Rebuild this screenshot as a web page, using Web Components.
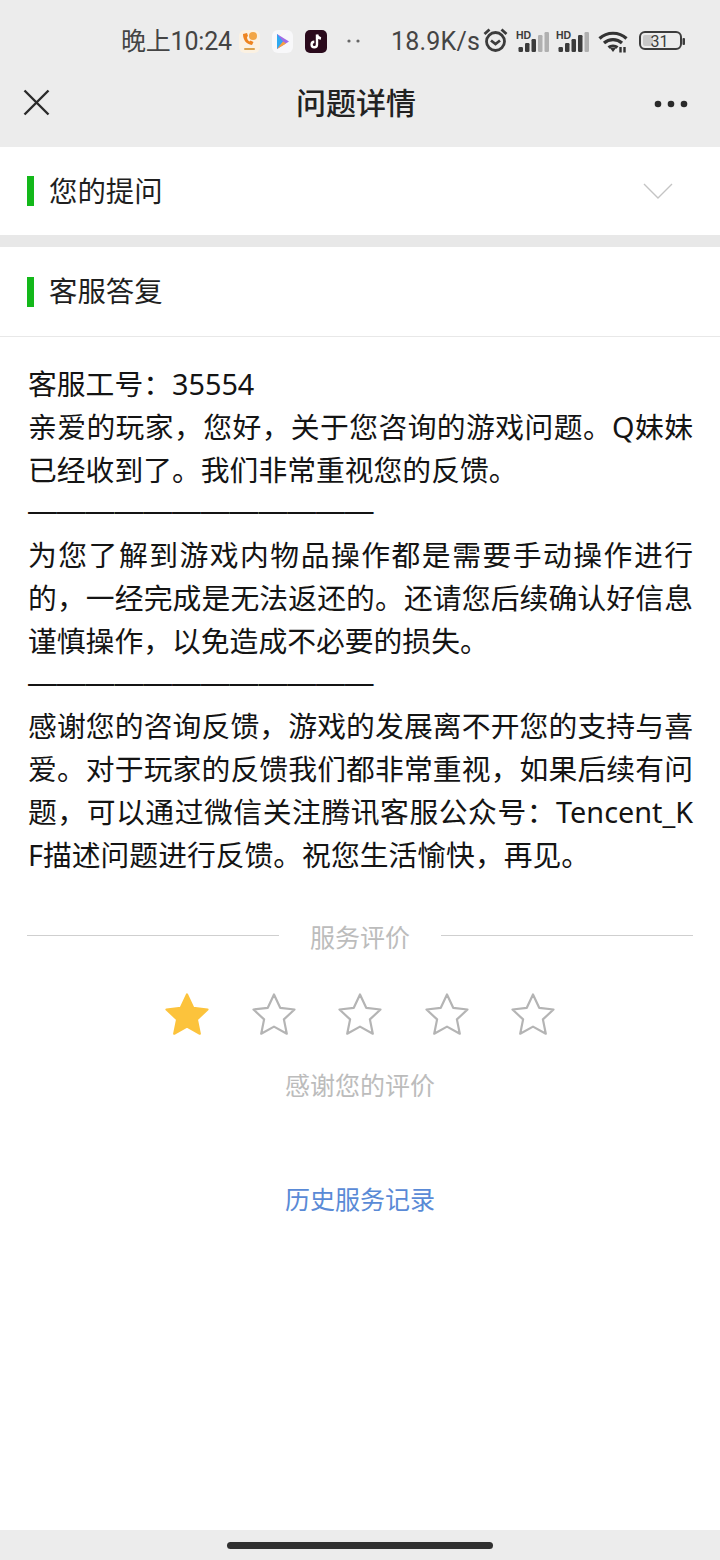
<!DOCTYPE html>
<html lang="zh-CN"><head><meta charset="utf-8"><title>问题详情</title>
<style>
html,body{margin:0;padding:0;background:#fff}
body{width:720px;height:1560px;display:flex;flex-direction:column;overflow:hidden;font-family:"Noto Sans CJK SC","Noto Sans",sans-serif;color:#1a1a1a}
</style></head><body>
<status-bar></status-bar>
<nav-bar title="问题详情"></nav-bar>
<section-head style="height:89px" chevron>您的提问</section-head>
<section-gap></section-gap>
<section-head style="height:90px;">客服答复</section-head>
<reply-body>
<p>客服工号：35554<br>亲爱的玩家，您好，关于您咨询的游戏问题。Q妹妹已经收到了。我们非常重视您的反馈。<br><dash-text>————————————</dash-text><br>为您了解到游戏内物品操作都是需要手动操作进行的，一经完成是无法返还的。还请您后续确认好信息谨慎操作，以免造成不必要的损失。<br><dash-text>————————————</dash-text><br>感谢您的咨询反馈，游戏的发展离不开您的支持与喜爱。对于玩家的反馈我们都非常重视，如果后续有问题，可以通过微信关注腾讯客服公众号：Tencent_KF描述问题进行反馈。祝您生活愉快，再见。</p>
</reply-body>
<service-rating score="1"></service-rating>
<history-link>历史服务记录</history-link>
<home-bar></home-bar>
<script>
function def(name, html){
  customElements.define(name, class extends HTMLElement{
    constructor(){super();this.attachShadow({mode:'open'}).innerHTML = html;}
  });
}
const hd = (n)=>{const xs=[2.5,9,15.5,22,28.5],hs=[5,9,13,17,20];
 return `<svg width="36" height="26" viewBox="0 0 36 26"><text x="0" y="10.500" font-family="Liberation Sans" font-weight="700" font-size="10.500" fill="#3c3c3c">HD</text>`+
 xs.map((x,i)=>`<rect x="${x}" y="${24-hs[i]}" width="4.500" height="${hs[i]}" rx="1.200" fill="${i<n?'#3c3c3c':'#b0b0b0'}"/>`).join('')+`</svg>`};
def('status-bar',`<style>
:host{display:flex;align-items:center;height:70px;background:#ececec;box-sizing:border-box;padding:12px 0 0 121px;color:#444;font:25px/30px Roboto,"Noto Sans CJK SC",sans-serif}
svg,b{display:block;flex:none}
.t{white-space:nowrap;padding-top:2px}
</style>
<span class="t" style="width:111px;letter-spacing:-.2px">晚上10:24</span>
<svg style="margin-left:7px" width="21" height="23" viewBox="0 0 21 23"><rect width="21" height="23" rx="6" fill="#fbf1e2"/><path d="M4 4c0 6 3 10 9 11l1.500-3-3-1.500-1 1c-1.500-1-2.500-2.500-2.500-4.500l1-1-1-3z" fill="#ee8420"/><circle cx="14" cy="6" r="4" fill="#f2a544"/><rect x="5" y="18" width="11" height="2" rx="1" fill="#dca24c"/></svg>
<svg style="margin-left:12px" width="21" height="23" viewBox="0 0 21 23"><rect width="21" height="23" rx="6" fill="#f8f8fa"/><path d="M5 4l12 7.500L5 19z" fill="#a06ce6"/><path d="M5 4l6 7.500L5 19z" fill="#2fa9f0"/><path d="M5 19l6-7.500 3 2z" fill="#f6a23e"/></svg>
<svg style="margin-left:12px" width="22" height="23" viewBox="0 0 22 23"><rect width="22" height="23" rx="5" fill="#2a0a1c"/><path d="M12 4.500v10a2.700 2.700 0 1 1-2.700-2.700M12 4.500c.3 2.400 1.700 3.700 4 4" fill="none" stroke="#fff" stroke-width="2.400"/></svg>
<svg style="margin-left:20px" width="13" height="6" viewBox="0 0 13 6"><circle cx="2" cy="3" r="1.600" fill="#666"/><circle cx="11" cy="3" r="1.600" fill="#666"/></svg>
<span class="t" style="margin-left:31px;width:89px;letter-spacing:.2px">18.9K/s</span>
<svg style="margin-left:3px;margin-top:-3px" width="25" height="26" viewBox="0 0 25 26" fill="none" stroke="#3c3c3c" stroke-width="2.800"><circle cx="12.500" cy="14.500" r="9"/><path d="M8 13.500l4.500 3.500 4.500-3.500M1.500 7l5-4.500M23.500 7l-5-4.500"/></svg>
<b style="margin-left:8px">${hd(3)}</b>
<b style="margin-left:4px">${hd(4)}</b>
<svg style="margin-left:5px" width="32" height="26" viewBox="0 0 32 26" fill="none" stroke="#333" stroke-width="3.200"><path d="M2.500 10.500c7.500-7 19.500-7 27 0M7 15c5-4.500 13-4.500 18 0M11.500 19.500c2.500-2 6.500-2 9 0"/><path d="M13 20h6l-3 4z" fill="#333" stroke="none"/><path d="M23.500 19v5.500M27.500 19v5.500" stroke-width="2.400"/></svg>
<svg style="margin-left:9px" width="48" height="22" viewBox="0 0 48 22"><rect x="2" y="2" width="41" height="17" rx="5" fill="none" stroke="#3c3c3c" stroke-width="2"/><rect x="5" y="5" width="10" height="11" rx="2" fill="#c8c8c8"/><text x="21.500" y="16.500" text-anchor="middle" font-family="Roboto" font-size="16" fill="#3c3c3c">31</text><rect x="44.500" y="8" width="2.500" height="7" rx="1" fill="#3c3c3c"/></svg>`);
def('nav-bar',`<style>
:host{display:grid;grid-template-columns:68px 1fr 76px;align-items:center;height:77px;box-sizing:border-box;padding-bottom:15px;background:#ececec;color:#222}
h1{margin:0;text-align:center;font:500 30px/40px "Noto Sans CJK SC",sans-serif}
.c{display:block;margin:2px 0 0 23px}
.m{display:block;margin:6px 0 0 10px}
</style>
<svg class="c" width="27" height="27" viewBox="0 0 27 27" fill="none" stroke="#2a2a2a" stroke-width="2.400"><path d="M1.500 1.500l24 24M25.500 1.500l-24 24"/></svg>
<h1>问题详情</h1>
<svg class="m" width="34" height="8" viewBox="0 0 34 8" fill="#2a2a2a"><circle cx="4" cy="4" r="3.300"/><circle cx="17" cy="4" r="3.300"/><circle cx="30" cy="4" r="3.300"/></svg>`);
customElements.define('section-head',class extends HTMLElement{
  constructor(){super();const chev=this.hasAttribute('chevron');
  this.attachShadow({mode:'open'}).innerHTML=`<style>
:host{display:flex;align-items:center;box-sizing:border-box;padding:0 47px 0 27px;background:#fff;border-bottom:1px solid #e8e8e8;color:#1f1f1f;font:28.400px/40px "Noto Sans CJK SC",sans-serif}
i{display:block;width:7px;height:30px;background:#13b81a;margin-right:15px}
span{flex:1;padding-bottom:3px}svg{display:block}
</style><i></i><span><slot></slot></span>${chev?'<svg width="30" height="16" viewBox="0 0 30 16" fill="none" stroke="#c4c4c4" stroke-width="1.400"><path d="M1 1l14 14L29 1"/></svg>':''}`}
});
def('section-gap',`<style>:host{display:block;height:11px;background:#e8e8e8}</style>`);
def('reply-body',`<style>
:host{display:block;padding:26px 27px 0 28px;color:#141414;font:28.800px/42.800px "Noto Sans","Noto Sans CJK SC",sans-serif;word-break:break-all;text-align:justify}
::slotted(p){margin:0}
</style><slot></slot>`);
def('dash-text',`<style>:host{font-family:"Liberation Sans",sans-serif;line-height:0;vertical-align:2px;white-space:nowrap}</style><slot></slot>`);
customElements.define('service-rating',class extends HTMLElement{
  constructor(){super();const s=+this.getAttribute('score');
  const star=(on)=>`<svg width="46" height="46" viewBox="0 0 46 46"><path d="M23 2.500l6.200 13.300 14.300 1.700-10.600 9.900 2.900 14.300L23 34.600l-12.800 7.100 2.900-14.300L2.500 17.500l14.300-1.700z" fill="${on?'#fcc33c':'none'}" stroke="${on?'#fcc33c':'#b4b4b4'}" stroke-width="2.200" stroke-linejoin="round"/></svg>`;
  this.attachShadow({mode:'open'}).innerHTML=`<style>
:host{display:block;padding:41px 27px 0;color:#bcbcbc;font:25px/36px "Noto Sans CJK SC",sans-serif}
.h{display:grid;grid-template-columns:1fr auto 1fr;align-items:center;column-gap:31px}
.h i{display:block;height:1px;background:#cfcfcf}
.s{display:flex;justify-content:center;gap:40.500px;margin-top:38px}
svg{display:block}
.b{text-align:center;margin-top:28px}
</style><div class="h"><i></i><span>服务评价</span><i></i></div>
<div class="s">${[1,2,3,4,5].map(i=>star(i<=s)).join('')}</div><div class="b">感谢您的评价</div>`}
});
def('history-link',`<style>:host{display:block;margin-top:78px;text-align:center;color:#5a8ad6;font:25px/36px "Noto Sans CJK SC",sans-serif}</style><slot></slot>`);
def('home-bar',`<style>:host{display:flex;justify-content:center;align-items:center;margin-top:auto;height:30px;background:#ececec}
i{display:block;width:266px;height:7px;border-radius:4px;background:#303030}</style><i></i>`);
</script>
</body></html>
